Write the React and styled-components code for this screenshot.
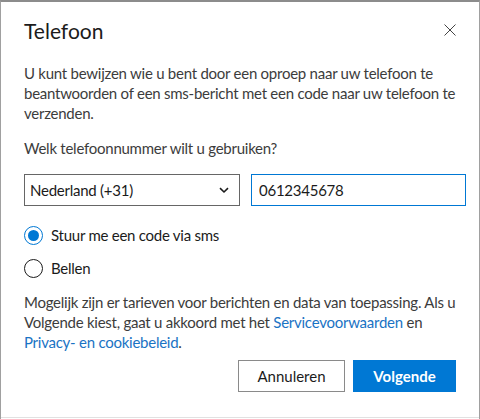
import React, { useState } from "react";
import styled, { createGlobalStyle } from "styled-components";

const GlobalStyle = createGlobalStyle`
  html, body {
    margin: 0;
    padding: 0;
    background: #ffffff;
  }
  body {
    font-family: "Segoe UI", "Lato", "Open Sans", sans-serif;
    color: #1b1b1b;
  }
  * { box-sizing: border-box; }
`;

const Frame = styled.div`
  width: 480px;
  height: 419px;
  border-top: 2px solid #8c8c8c;
  border-left: 1px solid #a0a0a0;
  border-right: 1px solid #a0a0a0;
  overflow: hidden;
`;

const Dialog = styled.div`
  height: 416px;
  border-bottom: 1px solid #e1e1e1;
  padding: 13px 23px 0 23px;
  display: flex;
  flex-direction: column;
`;

const Header = styled.div`
  display: flex;
  align-items: center;
  justify-content: space-between;
  height: 30px;
`;

const Title = styled.h1`
  margin: 0;
  font-size: 21px;
  font-weight: 400;
  color: #1b1b1b;
`;

const CloseButton = styled.button`
  border: none;
  background: none;
  padding: 0;
  width: 16px;
  height: 16px;
  display: flex;
  align-items: center;
  justify-content: center;
  margin-right: -2px;
  cursor: pointer;
`;

const Text = styled.p`
  margin: ${(p) => p.$mt || 0}px 0 0 0;
  font-size: 15px;
  line-height: 20px;
  letter-spacing: -0.25px;
  color: #3c3c3c;
`;

const Link = styled.a`
  color: #1a73c4;
  text-decoration: none;
`;

const FieldRow = styled.div`
  display: flex;
  gap: 11px;
  margin-top: 16px;
  margin-right: -10px;
`;

const SelectBox = styled.div`
  position: relative;
  flex: 0 0 216px;
  height: 32px;
  border: 1px solid #666666;
  display: flex;
  align-items: center;
  padding: 0 5px;
  font-size: 15px;
  letter-spacing: -0.25px;
  color: #1b1b1b;
`;

const Chevron = styled.svg`
  position: absolute;
  right: 10px;
  top: 12px;
`;

const PhoneInput = styled.input`
  flex: 0 0 215px;
  width: 215px;
  height: 32px;
  border: 1px solid #0078d4;
  outline: none;
  padding: 0 7px;
  font-family: inherit;
  font-size: 15px;
  letter-spacing: -0.25px;
  color: #1b1b1b;
`;

const RadioGroup = styled.div`
  display: flex;
  flex-direction: column;
  gap: 13px;
  margin-top: 19px;
`;

const RadioRow = styled.label`
  display: flex;
  align-items: center;
  gap: 8px;
  height: 20px;
  font-size: 15px;
  letter-spacing: -0.25px;
  color: #1b1b1b;
  cursor: pointer;
`;

const RadioCircle = styled.span`
  width: 19px;
  height: 19px;
  border-radius: 50%;
  border: 1px solid ${(p) => (p.$checked ? "#0078d4" : "#1b1b1b")};
  display: flex;
  align-items: center;
  justify-content: center;
  &::after {
    content: "";
    width: 11px;
    height: 11px;
    border-radius: 50%;
    background: ${(p) => (p.$checked ? "#0078d4" : "transparent")};
  }
`;

const Footer = styled.div`
  display: flex;
  justify-content: flex-end;
  gap: 8px;
  margin-top: 8px;
`;

const Button = styled.button`
  height: 32px;
  min-width: ${(p) => p.$w}px;
  font-family: inherit;
  font-size: 15px;
  font-weight: ${(p) => (p.$primary ? 700 : 400)};
  color: ${(p) => (p.$primary ? "#ffffff" : "#1b1b1b")};
  background: ${(p) => (p.$primary ? "#0078d4" : "#ffffff")};
  border: 1px solid ${(p) => (p.$primary ? "#0078d4" : "#8a8a8a")};
  cursor: pointer;
`;

export default function App() {
  const [method, setMethod] = useState("sms");
  return (
    <>
      <GlobalStyle />
      <Frame>
        <Dialog>
          <Header>
            <Title>Telefoon</Title>
            <CloseButton aria-label="Sluiten">
              <svg width="12" height="12" viewBox="0 0 12 12">
                <path d="M0.5 0.5 L11.5 11.5 M11.5 0.5 L0.5 11.5" stroke="#444" strokeWidth="1" />
              </svg>
            </CloseButton>
          </Header>
          <Text $mt={18}>
            U kunt bewijzen wie u bent door een oproep naar uw telefoon te beantwoorden of een sms-bericht met een code naar uw telefoon te verzenden.
          </Text>
          <Text $mt={15}>Welk telefoonnummer wilt u gebruiken?</Text>
          <FieldRow>
            <SelectBox>
              Nederland (+31)
              <Chevron width="10" height="7" viewBox="0 0 10 7">
                <path d="M1 1.2 L5 5 L9 1.2" fill="none" stroke="#1b1b1b" strokeWidth="1.6" />
              </Chevron>
            </SelectBox>
            <PhoneInput defaultValue="0612345678" />
          </FieldRow>
          <RadioGroup>
            <RadioRow onClick={() => setMethod("sms")}>
              <RadioCircle $checked={method === "sms"} />
              Stuur me een code via sms
            </RadioRow>
            <RadioRow onClick={() => setMethod("call")}>
              <RadioCircle $checked={method === "call"} />
              Bellen
            </RadioRow>
          </RadioGroup>
          <Text $mt={14}>
            Mogelijk zijn er tarieven voor berichten en data van toepassing. Als u Volgende kiest, gaat u akkoord met het{" "}
            <Link href="#">Servicevoorwaarden</Link> en <Link href="#">Privacy- en cookiebeleid</Link>.
          </Text>
          <Footer>
            <Button $w={107}>Annuleren</Button>
            <Button $primary $w={103}>Volgende</Button>
          </Footer>
        </Dialog>
      </Frame>
    </>
  );
}
